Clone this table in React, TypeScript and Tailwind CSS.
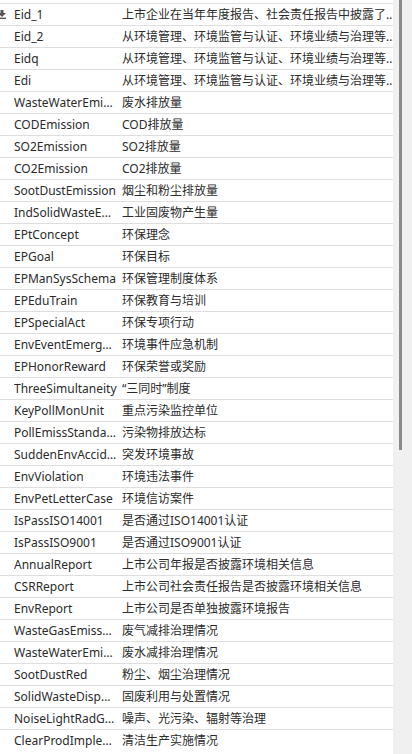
import React from "react";

const rows: [string, string][] = [
  ["Eid_1", "上市企业在当年年度报告、社会责任报告中披露了…"],
  ["Eid_2", "从环境管理、环境监管与认证、环境业绩与治理等…"],
  ["Eidq", "从环境管理、环境监管与认证、环境业绩与治理等…"],
  ["Edi", "从环境管理、环境监管与认证、环境业绩与治理等…"],
  ["WasteWaterEmi…", "废水排放量"],
  ["CODEmission", "COD排放量"],
  ["SO2Emission", "SO2排放量"],
  ["CO2Emission", "CO2排放量"],
  ["SootDustEmission", "烟尘和粉尘排放量"],
  ["IndSolidWasteE…", "工业固废物产生量"],
  ["EPtConcept", "环保理念"],
  ["EPGoal", "环保目标"],
  ["EPManSysSchema", "环保管理制度体系"],
  ["EPEduTrain", "环保教育与培训"],
  ["EPSpecialAct", "环保专项行动"],
  ["EnvEventEmerg…", "环境事件应急机制"],
  ["EPHonorReward", "环保荣誉或奖励"],
  ["ThreeSimultaneity", "“三同时”制度"],
  ["KeyPollMonUnit", "重点污染监控单位"],
  ["PollEmissStanda…", "污染物排放达标"],
  ["SuddenEnvAccid…", "突发环境事故"],
  ["EnvViolation", "环境违法事件"],
  ["EnvPetLetterCase", "环境信访案件"],
  ["IsPassISO14001", "是否通过ISO14001认证"],
  ["IsPassISO9001", "是否通过ISO9001认证"],
  ["AnnualReport", "上市公司年报是否披露环境相关信息"],
  ["CSRReport", "上市公司社会责任报告是否披露环境相关信息"],
  ["EnvReport", "上市公司是否单独披露环境报告"],
  ["WasteGasEmiss…", "废气减排治理情况"],
  ["WasteWaterEmi…", "废水减排治理情况"],
  ["SootDustRed", "粉尘、烟尘治理情况"],
  ["SolidWasteDisp…", "固废利用与处置情况"],
  ["NoiseLightRadG…", "噪声、光污染、辐射等治理"],
  ["ClearProdImple…", "清洁生产实施情况"],
];

function SortIcon() {
  return (
    <svg width="10" height="9" viewBox="0 0 10 9" className="-ml-[3px]">
      <path d="M3.5 0 H6.5 V3 H9 L5 7 L1 3 H3.5 Z" fill="#555" />
      <rect x="1" y="7.6" width="8" height="1.4" fill="#555" />
    </svg>
  );
}

export default function App() {
  return (
    <div
      className="flex h-[754px] w-[412px] overflow-hidden bg-white text-[12px] text-[#2b2b2b]"
      style={{ fontFamily: '"Noto Sans", "Noto Sans CJK SC", sans-serif' }}
    >
      <div className="flex w-[393px] flex-col overflow-hidden pt-[3px]">
        {rows.map(([name, desc], i) => (
          <div
            key={i}
            className="flex h-[22px] shrink-0 items-center border-t border-[#dedede]"
          >
            <div className="flex w-[14px] shrink-0 items-center overflow-hidden">
              {i === 0 ? <SortIcon /> : null}
            </div>
            <div className="w-[105px] shrink-0 overflow-hidden whitespace-nowrap leading-[20px]">
              {name}
            </div>
            <div className="ml-[3px] min-w-0 flex-1 overflow-hidden whitespace-nowrap leading-[20px]">
              {desc}
            </div>
          </div>
        ))}
      </div>
      <div className="flex w-[19px] shrink-0 bg-[#f0f0f0]">
        <div className="ml-[6px] h-[450px] w-[3px] bg-[#8a8a8a]" />
      </div>
    </div>
  );
}
